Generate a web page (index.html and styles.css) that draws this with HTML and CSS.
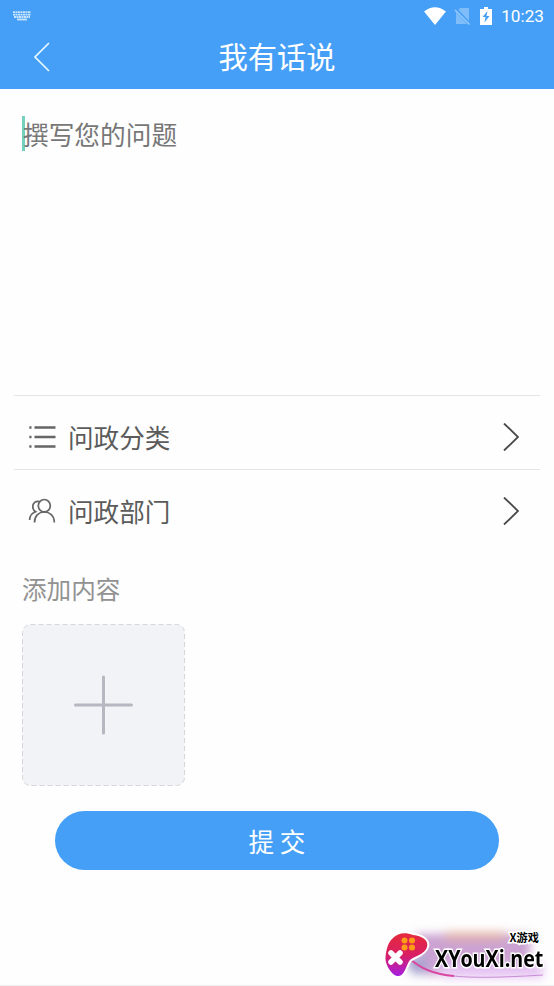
FILE: index.html
```html
<!DOCTYPE html>
<html lang="zh-CN">
<head>
<meta charset="utf-8">
<title>我有话说</title>
<link rel="stylesheet" href="styles.css">
</head>
<body>
<header class="top">
  <div class="status">
    <svg class="keyboard" width="18" height="10" viewBox="0 0 18 10"><path d="M0 1.2h18M0 3.6h18M1 6h16" stroke-dasharray="2 .5"/><path d="M4 8.5h10"/></svg>
    <div class="indicators">
      <svg class="wifi" width="22" height="18" viewBox="0 0 22 18"><path d="M0 4.5Q11-4 22 4.5L11 18Z"/></svg>
      <svg class="sim" width="17" height="17" viewBox="0 0 17 17"><path d="M6 0h9v13L4.500 2ZM2 4.500l11 11.500H2Z"/><path class="slash" d="M1 2l14.500 14.500"/></svg>
      <svg class="battery" width="12" height="18" viewBox="0 0 12 18"><path d="M4 0h4v2h4v16H0V2h4Z"/><path class="bolt" d="M7.5 4 2.5 10h3L4.5 15.5 9.5 9h-3Z"/></svg>
      <span class="clock">10:23</span>
    </div>
  </div>
  <div class="nav">
    <svg class="back" width="16" height="30" viewBox="0 0 16 30"><path d="M15 1 1 15 15 29"/></svg>
    <h1 class="title">我有话说</h1>
  </div>
</header>
<main class="content">
  <section class="editor"><span class="caret"></span><span class="placeholder">撰写您的问题</span></section>
  <div class="row">
    <svg class="icon" width="28" height="28" viewBox="0 0 28 28"><path class="bars" d="M6.500 4.500h21M6.500 14h21M6.500 23.500h21M1.300 4.500h2.200M1.300 14h2.200M1.300 23.500h2.200"/></svg>
    <span class="name">问政分类</span>
    <svg class="arrow" width="16" height="28" viewBox="0 0 16 28"><path d="M1 .5 15 14 1 27.5"/></svg>
  </div>
  <div class="row">
    <svg class="icon" width="28" height="28" viewBox="0 0 28 28"><g class="people"><ellipse cx="16.300" cy="8.700" rx="6" ry="6.200"/><path d="M6.500 25.500C6.500 18.500 11 15 16.300 15S26.300 18.500 26.300 25.500M11.500 4.500C7.500 3.700 4.800 6 4.800 9.500c0 2.500 1 4.200 2.800 5.200C4 16 1.600 19 1.600 23"/></g></svg>
    <span class="name">问政部门</span>
    <svg class="arrow" width="16" height="28" viewBox="0 0 16 28"><path d="M1 .5 15 14 1 27.500"/></svg>
  </div>
  <section class="attach">
    <h2 class="label">添加内容</h2>
    <svg class="upload" width="163" height="162" viewBox="0 0 163 162"><rect x=".5" y=".5" width="162" height="161" rx="8"/><path d="M53.500 81h56M81.500 53v56"/></svg>
  </section>
  <button class="submit">提 交</button>
</main>
<footer class="foot">
  <div class="brand">
    <svg class="glow" width="184" height="65" viewBox="0 0 184 65">
      <defs>
        <filter id="soft" x="-30%" y="-50%" width="160%" height="200%"><feGaussianBlur stdDeviation="5"/></filter>
        <linearGradient id="pad" x1="0" y1="0" x2="0" y2="1"><stop offset="0" stop-color="#e52a3c"/><stop offset=".5" stop-color="#d91f62"/><stop offset="1" stop-color="#a51ee0"/></linearGradient>
      </defs>
      <g filter="url(#soft)"><path fill="#cba2d2" d="M45 14H160V55H55Z"/><path fill="#e2b3a8" d="M75 12h60v8H75Z"/><path fill="#e6c5f3" d="M65 43h108v15H75Z"/><path fill="#a7a2cf" d="M34 36h23v18H42Z"/></g>
      <path d="M38 37Q55 54 84 56" fill="none" stroke="#d746a0" stroke-width="1.800"/>
      <path d="M84 56Q110 59 173 55" fill="none" stroke="#c98bd6" stroke-width="1"/>
      <path d="M23 18C28 13 35 12 43 15C52 16 59 20 57 27C55 34 45 36 40 40C36 45 35 55 29 56C22 57 15 44 15.500 38C16 30 18 22 23 18Z" fill="url(#pad)" stroke="#fff" stroke-width="4" paint-order="stroke"/>
      <path d="M21 33l9 9M30 33 21 42" stroke="#fff" stroke-width="5.500" stroke-linecap="round"/>
      <g fill="#ff9d16"><circle cx="34.500" cy="20.500" r="3"/><circle cx="42" cy="20.500" r="3"/><circle cx="34.500" cy="27.500" r="3"/><circle cx="42" cy="27.500" r="3"/></g>
    </svg>
    <span class="tag">X游戏</span>
    <span class="site">XYouXi.net</span>
  </div>
</footer>
</body>
</html>
```
FILE: styles.css
```css
* { box-sizing: border-box; }
body {
  margin: 0;
  height: 986px;
  display: flex;
  flex-direction: column;
  overflow: hidden;
  background: #fefefe;
  font-family: "Noto Sans CJK SC", sans-serif;
}
svg { display: block; flex: none; }
h1, h2 { margin: 0; font-weight: 400; }
.top { height: 89px; background: #469ff6; color: #fff; }
.status { height: 32px; display: flex; justify-content: space-between; padding: 0 10px 0 13px; }
.keyboard { margin-top: 11px; fill: none; stroke: #c8e5fc; stroke-width: 1.8; }
.indicators { display: flex; align-items: center; }
.wifi { fill: #fff; margin-right: 8px; }
.sim { fill: #7ebdf9; margin-right: 9px; }
.slash { stroke: #9accfb; stroke-width: 1.5; }
.battery { fill: #fff; margin-right: 9px; }
.bolt { fill: #469ff6; }
.clock { font: 17.2px/32px Roboto, sans-serif; }
.nav { height: 50px; display: grid; grid-template-columns: 34px 1fr 34px; align-items: center; }
.back { grid-column: 1; margin-left: 34px; fill: none; stroke: #e5f8ff; stroke-width: 1.7; }
.title { grid-column: 2; text-align: center; font-size: 29.3px; line-height: 46px; padding-bottom: 4px; }
.content { padding: 0 14px; display: flex; flex-direction: column; }
.editor { height: 306px; padding: 27px 0 0 8px; display: flex; align-items: flex-start; }
.caret { width: 3px; height: 35px; margin-right: -3px; background: #75d0bd; }
.placeholder { margin-left: 1px; font-size: 25.7px; line-height: 35px; color: #777; }
.row { height: 74px; border-top: 1px solid #e5e5e5; display: flex; align-items: center; padding: 8px 21px 0 14px; color: #5b5b5b; }
.name { flex: 1; margin-left: 12px; font-size: 25.6px; line-height: 38px; }
.icon { fill: none; stroke: #666; }
.bars { stroke-width: 2.4; }
.people { stroke-width: 1.7; }
.arrow { fill: none; stroke: #484848; stroke-width: 1.8; }
.attach { padding: 27px 8px 0; }
.label { font-size: 24.6px; line-height: 36px; height: 54px; color: #929292; }
.upload { fill: #f2f3f7; stroke: #d6d5da; stroke-dasharray: 5 3; }
.upload path { stroke: #b6b7c1; stroke-width: 3; stroke-dasharray: none; stroke-linecap: round; }
.submit { width: 444px; height: 59px; margin: 25px 0 0 41px; padding: 1px 0 0; border: 0; border-radius: 30px; background: #469ff6; color: #fff; font: 25.6px/58px "Noto Sans CJK SC", sans-serif; }
.foot { margin-top: auto; height: 66px; border-bottom: 1px solid #eee; display: flex; justify-content: flex-end; }
.brand { position: relative; width: 184px; height: 65px; }
.tag, .site {
  position: absolute;
  color: #000;
  font-weight: 700;
  white-space: nowrap;
  -webkit-text-stroke: 3px #fff;
  paint-order: stroke fill;
}
.tag { left: 139.5px; top: 10px; font-size: 11.2px; line-height: 14px; }
.site { left: 64.5px; top: 25px; font: 700 24px/26px "Open Sans", sans-serif; transform: scaleX(.82); transform-origin: left; }
```
